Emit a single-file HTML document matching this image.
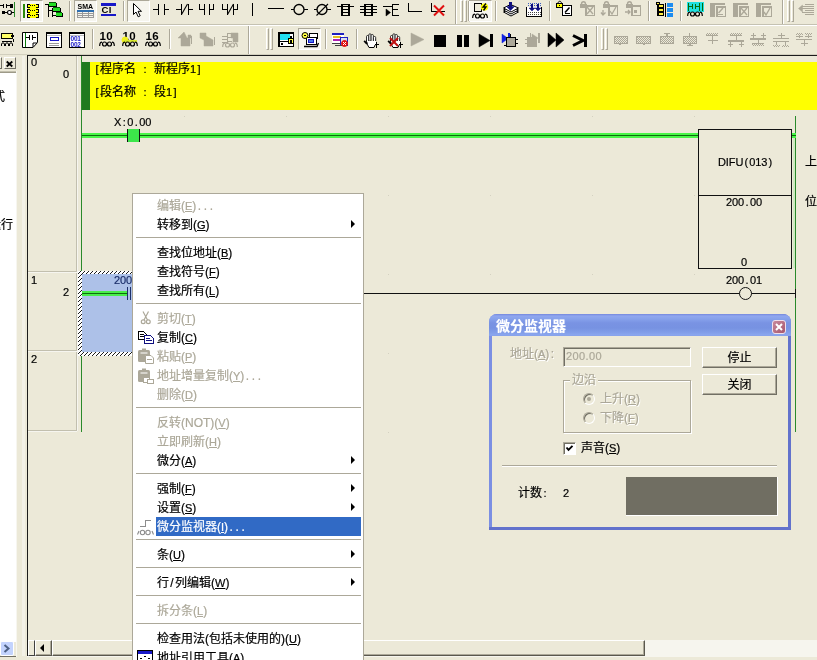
<!DOCTYPE html>
<html lang="zh-CN">
<head>
<meta charset="utf-8">
<title>CX-Programmer</title>
<style>
*{box-sizing:border-box;margin:0;padding:0}
html,body{width:817px;height:660px;overflow:hidden;background:#ece9d8}
body{position:relative;font-family:"Liberation Sans","Noto Sans CJK SC",sans-serif;font-size:12px;color:#000;line-height:1}
.a{position:absolute}
.mono{font-family:"Liberation Sans","Noto Sans CJK SC",sans-serif;font-size:11px;letter-spacing:-0.1px;white-space:pre}
.mono i{display:inline-block;width:6px;text-align:center;font-style:normal;letter-spacing:0}
.cj{font-family:"Liberation Sans","Noto Sans CJK SC",sans-serif;font-size:12px;white-space:pre}
svg{position:absolute;overflow:visible}
/* toolbar */
.sep{position:absolute;width:2px;height:20px;border-left:1px solid #aca899;border-right:1px solid #fff}
.grip{position:absolute;width:7px;height:22px}
.grip i{position:absolute;top:0;width:3px;height:22px;border-left:1px solid #fff;border-top:1px solid #fff;border-right:1px solid #aca899;border-bottom:1px solid #aca899}
.chk{position:absolute;width:23px;height:22px;background:#f6f5ee;border:1px solid;border-color:#aca899 #fff #fff #aca899}
/* menu */
#menu{left:132px;top:193px;width:232px;height:480px;background:#fff;border:1px solid #aca899}
.mi{position:absolute;left:2px;width:226px;height:19px}
.mi span{position:absolute;left:22px;top:4px;white-space:pre;font-size:12px}
.mi u{text-decoration:underline}
i.p{display:inline-block;width:4px;text-align:center;font-style:normal}
i.q{display:inline-block;width:6px;text-align:center;font-style:normal}
u{font-size:11px}
.mi.d span{color:#aca899}
.mi.h{background:linear-gradient(to right,transparent 21px,#316ac5 21px)}
.mi.h span{color:#fff}
.ms{position:absolute;left:3px;width:225px;height:1px;background:#aca899}
.arr{position:absolute;left:216px;top:5px;width:0;height:0;border-left:4px solid #000;border-top:4px solid transparent;border-bottom:4px solid transparent}
/* dialog */
.btn{position:absolute;background:#ece9d8;border:1px solid;border-color:#fff #716f64 #716f64 #fff;box-shadow:inset -1px -1px 0 #aca899;text-align:center}
.dis{color:#aca899;text-shadow:1px 1px 0 #fff}
#root{-webkit-text-stroke:0.2px}
</style>
</head>
<body>
<div id="root" style="position:absolute;left:0;top:0;width:817px;height:660px;overflow:hidden;will-change:transform">

<!-- ===== toolbar rows ===== -->
<div class="a" id="tb1" style="left:0;top:0;width:817px;height:24px"></div>
<div class="a" style="left:0;top:24px;width:817px;height:1px;background:#c5c2b2"></div>
<div class="a" style="left:0;top:25px;width:817px;height:1px;background:#fff"></div>
<div class="a" id="tb2" style="left:0;top:26px;width:817px;height:28px"></div>
<div class="a" style="left:0;top:54px;width:817px;height:1px;background:#d2cfbe"></div>

<!-- TB-START -->
<div class="chk" style="left:20px;top:0"></div>
<div class="chk" style="left:74px;top:0"></div>
<div class="chk" style="left:127px;top:0"></div>
<div class="chk" style="left:469px;top:0"></div>
<div class="chk" style="left:298px;top:28px"></div>
<div class="sep" style="left:69px;top:1px"></div>
<div class="sep" style="left:123px;top:1px"></div>
<div class="sep" style="left:468px;top:1px"></div>
<div class="sep" style="left:495px;top:1px"></div>
<div class="sep" style="left:549px;top:1px"></div>
<div class="sep" style="left:648px;top:1px"></div>
<div class="sep" style="left:680px;top:1px"></div>
<div class="sep" style="left:455px;top:0;height:24px"></div>
<div class="sep" style="left:782px;top:0;height:24px"></div>
<div class="sep" style="left:92px;top:29px"></div>
<div class="sep" style="left:169px;top:29px"></div>
<div class="sep" style="left:325px;top:29px"></div>
<div class="sep" style="left:356px;top:29px"></div>
<div class="sep" style="left:248px;top:26px;height:28px"></div>
<div class="sep" style="left:596px;top:26px;height:28px"></div>
<div class="grip" style="left:460px;top:0"><i style="left:0"></i><i style="left:4px"></i></div>
<div class="grip" style="left:787px;top:0"><i style="left:0"></i><i style="left:4px"></i></div>
<div class="grip" style="left:266px;top:28px"><i style="left:0"></i><i style="left:4px"></i></div>
<div class="grip" style="left:601px;top:28px"><i style="left:0"></i><i style="left:4px"></i></div>
<svg style="left:0;top:0" width="817" height="55" viewBox="0 0 817 55" shape-rendering="crispEdges"><defs><pattern id="dt" width="2" height="2" patternUnits="userSpaceOnUse"><rect width="2" height="2" fill="#ece9d8"/><rect width="1" height="1" fill="#aca899"/><rect x="1" y="1" width="1" height="1" fill="#aca899"/></pattern></defs>
<rect x="0" y="5" width="3" height="1" fill="#000"/>
<rect x="3" y="4" width="1" height="4" fill="#000"/>
<rect x="6" y="4" width="1" height="4" fill="#000"/>
<rect x="7" y="5" width="3" height="1" fill="#000"/>
<rect x="10" y="4" width="3" height="4" fill="#000"/>
<rect x="2" y="11" width="3" height="3" fill="#000"/>
<rect x="5" y="12" width="2" height="1" fill="#000"/>
<circle cx="9.5" cy="12.5" r="2" fill="#fff" stroke="#000" stroke-width="1.2" shape-rendering="auto"/>
<rect x="12" y="12" width="2" height="1" fill="#000"/>
<rect x="14" y="2" width="1" height="15" fill="#2a8a2a"/>
<rect x="23" y="4" width="2" height="14" fill="#2a8a0a"/>
<rect x="28" y="4" width="10" height="14" fill="#ffff00"/>
<rect x="27" y="4" width="1" height="4" fill="#000"/>
<rect x="27" y="4" width="3" height="1" fill="#000"/>
<rect x="27" y="7" width="3" height="1" fill="#000"/>
<rect x="38" y="4" width="1" height="4" fill="#000"/>
<rect x="36" y="4" width="3" height="1" fill="#000"/>
<rect x="36" y="7" width="3" height="1" fill="#000"/>
<rect x="30" y="5" width="1" height="1" fill="#000"/>
<rect x="32" y="5" width="1" height="1" fill="#000"/>
<rect x="34" y="5" width="1" height="1" fill="#000"/>
<rect x="27" y="9" width="1" height="4" fill="#000"/>
<rect x="27" y="9" width="3" height="1" fill="#000"/>
<rect x="27" y="12" width="3" height="1" fill="#000"/>
<rect x="38" y="9" width="1" height="4" fill="#000"/>
<rect x="36" y="9" width="3" height="1" fill="#000"/>
<rect x="36" y="12" width="3" height="1" fill="#000"/>
<rect x="30" y="10" width="1" height="1" fill="#000"/>
<rect x="32" y="10" width="1" height="1" fill="#000"/>
<rect x="34" y="10" width="1" height="1" fill="#000"/>
<rect x="27" y="14" width="1" height="4" fill="#000"/>
<rect x="27" y="14" width="3" height="1" fill="#000"/>
<rect x="27" y="17" width="3" height="1" fill="#000"/>
<rect x="38" y="14" width="1" height="4" fill="#000"/>
<rect x="36" y="14" width="3" height="1" fill="#000"/>
<rect x="36" y="17" width="3" height="1" fill="#000"/>
<rect x="30" y="15" width="1" height="1" fill="#000"/>
<rect x="32" y="15" width="1" height="1" fill="#000"/>
<rect x="34" y="15" width="1" height="1" fill="#000"/>
<rect x="45" y="4" width="4" height="1" fill="#000"/>
<rect x="48" y="4" width="1" height="13" fill="#000"/>
<rect x="49" y="3" width="7" height="3" fill="#22dd22"/>
<rect x="49" y="6" width="8" height="1" fill="#000"/>
<rect x="56" y="3" width="1" height="3" fill="#000"/>
<rect x="49" y="2" width="7" height="1" fill="#0a5a0a"/>
<rect x="48" y="10" width="4" height="1" fill="#000"/>
<rect x="52" y="8" width="1" height="9" fill="#000"/>
<rect x="53" y="8" width="7" height="3" fill="#22dd22"/>
<rect x="53" y="11" width="8" height="1" fill="#000"/>
<rect x="60" y="8" width="1" height="3" fill="#000"/>
<rect x="53" y="7" width="7" height="1" fill="#0a5a0a"/>
<rect x="52" y="15" width="4" height="1" fill="#000"/>
<rect x="56" y="13" width="6" height="3" fill="#22dd22"/>
<rect x="56" y="16" width="7" height="1" fill="#000"/>
<rect x="62" y="13" width="1" height="3" fill="#000"/>
<rect x="56" y="12" width="6" height="1" fill="#0a5a0a"/>
<text x="77.5" y="9" font-family="Liberation Sans,sans-serif" font-size="7" font-weight="bold" fill="#000">SMA</text>
<rect x="77" y="10" width="17" height="2" fill="#2f6fb0"/>
<rect x="77" y="13" width="17" height="1" fill="#9a9a9a"/>
<rect x="77" y="15" width="17" height="1" fill="#9a9a9a"/>
<rect x="77" y="17" width="17" height="1" fill="#9a9a9a"/>
<rect x="77" y="12" width="1" height="6" fill="#9a9a9a"/>
<rect x="82" y="12" width="1" height="6" fill="#9a9a9a"/>
<rect x="88" y="12" width="1" height="6" fill="#9a9a9a"/>
<rect x="93" y="12" width="1" height="6" fill="#9a9a9a"/>
<rect x="101" y="3" width="15" height="3" fill="#1818c8"/>
<rect x="101" y="14" width="15" height="2" fill="#1818c8"/>
<text x="101.5" y="13" font-family="Liberation Sans,sans-serif" font-size="9.5" font-weight="bold" letter-spacing="0.5" fill="#000">CI</text>
<path d="M133.5 3.5L133.5 14.5L136 12L138.2 16.8L140.2 15.8L138 11.3L141.5 11.3Z" fill="#fff" stroke="#000" stroke-width="1" shape-rendering="auto"/>
<rect x="153" y="9" width="5" height="1" fill="#000"/>
<rect x="158" y="4" width="1" height="11" fill="#000"/>
<rect x="164" y="4" width="1" height="11" fill="#000"/>
<rect x="165" y="9" width="4" height="1" fill="#000"/>
<rect x="176" y="9" width="5" height="1" fill="#000"/>
<rect x="181" y="4" width="1" height="11" fill="#000"/>
<rect x="188" y="4" width="1" height="11" fill="#000"/>
<rect x="189" y="9" width="4" height="1" fill="#000"/>
<line x1="181.5" y1="14.5" x2="187.5" y2="4" stroke="#000" stroke-width="1.1" shape-rendering="auto"/>
<rect x="199" y="4" width="1" height="6" fill="#000"/>
<rect x="199" y="9" width="5" height="1" fill="#000"/>
<rect x="204" y="4" width="1" height="11" fill="#000"/>
<rect x="209" y="4" width="1" height="11" fill="#000"/>
<rect x="209" y="9" width="5" height="1" fill="#000"/>
<rect x="213" y="4" width="1" height="6" fill="#000"/>
<rect x="222" y="4" width="1" height="6" fill="#000"/>
<rect x="222" y="9" width="5" height="1" fill="#000"/>
<rect x="227" y="4" width="1" height="11" fill="#000"/>
<rect x="233" y="4" width="1" height="11" fill="#000"/>
<rect x="233" y="9" width="5" height="1" fill="#000"/>
<rect x="237" y="4" width="1" height="6" fill="#000"/>
<line x1="227.5" y1="14.5" x2="233.5" y2="4" stroke="#000" stroke-width="1.1" shape-rendering="auto"/>
<rect x="252" y="3" width="1" height="13" fill="#000"/>
<rect x="268" y="8" width="16" height="1" fill="#000"/>
<rect x="291" y="9" width="3" height="1" fill="#000"/>
<rect x="304" y="9" width="4" height="1" fill="#000"/>
<circle cx="299" cy="9.5" r="5" fill="none" stroke="#000" stroke-width="1.35" shape-rendering="auto"/>
<rect x="314" y="9" width="3" height="1" fill="#000"/>
<rect x="327" y="9" width="4" height="1" fill="#000"/>
<circle cx="322" cy="9.5" r="5" fill="none" stroke="#000" stroke-width="1.35" shape-rendering="auto"/>
<line x1="316.5" y1="15.5" x2="328" y2="4" stroke="#000" stroke-width="1.1" shape-rendering="auto"/>
<rect x="343" y="5" width="5" height="10" fill="#ece9d8"/>
<rect x="341" y="4" width="2" height="12" fill="#000"/>
<rect x="348" y="4" width="2" height="12" fill="#000"/>
<rect x="341" y="4" width="9" height="1" fill="#000"/>
<rect x="341" y="15" width="9" height="1" fill="#000"/>
<rect x="337" y="6" width="17" height="1" fill="#000"/>
<rect x="343" y="9" width="5" height="1" fill="#000"/>
<rect x="343" y="12" width="5" height="1" fill="#000"/>
<rect x="366" y="5" width="5" height="10" fill="#ece9d8"/>
<rect x="364" y="4" width="2" height="12" fill="#000"/>
<rect x="371" y="4" width="2" height="12" fill="#000"/>
<rect x="364" y="4" width="9" height="1" fill="#000"/>
<rect x="364" y="15" width="9" height="1" fill="#000"/>
<rect x="360" y="6" width="17" height="1" fill="#000"/>
<rect x="360" y="9" width="17" height="1" fill="#000"/>
<rect x="360" y="12" width="17" height="1" fill="#000"/>
<rect x="383" y="6" width="10" height="1" fill="#000"/>
<rect x="392" y="4" width="1" height="12" fill="#000"/>
<rect x="392" y="4" width="7" height="1" fill="#000"/>
<rect x="392" y="9" width="6" height="1" fill="#000"/>
<rect x="392" y="15" width="7" height="1" fill="#000"/>
<path d="M386 9L386 16L390.5 12.5Z" fill="#000" stroke="#000" stroke-width="0.5" shape-rendering="auto"/>
<rect x="408" y="3" width="1" height="9" fill="#000"/>
<rect x="408" y="11" width="14" height="1" fill="#000"/>
<rect x="431" y="3" width="1" height="9" fill="#000"/>
<rect x="431" y="11" width="14" height="1" fill="#000"/>
<line x1="434" y1="5.5" x2="444" y2="15.5" stroke="#e01010" stroke-width="2" shape-rendering="auto"/>
<line x1="444" y1="5.5" x2="434" y2="15.5" stroke="#e01010" stroke-width="2" shape-rendering="auto"/>
<rect x="474.7" y="3.7" width="6.6" height="7.6" fill="#ece9d8" stroke="#000" stroke-width="1.4"/>
<circle cx="484.5" cy="7" r="3.3" fill="#ffff00" stroke="#ffff00" stroke-width="1" shape-rendering="auto"/>
<path d="M486 3.5L483 7L486 7L483.5 10.5" fill="none" stroke="#000" stroke-width="1.3" shape-rendering="auto"/>
<path d="M472.7 18C472.7 15 473.5 14.2 475 14.2" fill="none" stroke="#000" stroke-width="1.2" shape-rendering="auto"/>
<circle cx="477.5" cy="16" r="2" fill="none" stroke="#000" stroke-width="1.2" shape-rendering="auto"/>
<circle cx="482.5" cy="16" r="2" fill="none" stroke="#000" stroke-width="1.2" shape-rendering="auto"/>
<path d="M479.5 15.5L480.5 15.5" fill="none" stroke="#000" stroke-width="1" shape-rendering="auto"/>
<path d="M485 14.2C486.5 14.2 487.3 15 487.3 18" fill="none" stroke="#000" stroke-width="1.2" shape-rendering="auto"/>
<path d="M503.5 12L510.5 8.5L518.5 12L511 16Z" fill="#fff" stroke="#000" stroke-width="1" shape-rendering="auto"/>
<path d="M503.5 10L510.5 6.5L518.5 10L511 14Z" fill="#fff" stroke="#000" stroke-width="1" shape-rendering="auto"/>
<path d="M503.5 8L510.5 4.5L518.5 8L511 12Z" fill="#fff" stroke="#000" stroke-width="1" shape-rendering="auto"/>
<rect x="509" y="2" width="3" height="5" fill="#101080"/>
<path d="M506.5 6.5L514.5 6.5L510.5 10.5Z" fill="#101080" stroke="#101080" stroke-width="0.5" shape-rendering="auto"/>
<rect x="527" y="7" width="14" height="9" fill="#fff"/>
<rect x="526" y="7" width="1" height="10" fill="#000"/>
<rect x="541" y="7" width="1" height="10" fill="#000"/>
<rect x="526" y="16" width="16" height="1" fill="#000"/>
<line x1="528" y1="3.5" x2="541" y2="3.5" stroke="#4060c0" stroke-width="1" stroke-dasharray="1 1"/>
<line x1="528" y1="5.5" x2="541" y2="5.5" stroke="#4060c0" stroke-width="1" stroke-dasharray="1 1"/>
<line x1="528" y1="12.5" x2="541" y2="12.5" stroke="#404040" stroke-width="1" stroke-dasharray="1 1"/>
<line x1="528" y1="14.5" x2="541" y2="14.5" stroke="#404040" stroke-width="1" stroke-dasharray="1 1"/>
<rect x="531" y="4" width="2" height="4" fill="#101080"/>
<path d="M529 8L535 8L532 11Z" fill="#101080" stroke="#101080" stroke-width="0.5" shape-rendering="auto"/>
<rect x="537" y="4" width="2" height="4" fill="#101080"/>
<path d="M535 8L541 8L538 11Z" fill="#101080" stroke="#101080" stroke-width="0.5" shape-rendering="auto"/>
<rect x="556.5" y="3.5" width="6" height="4" fill="#ffff00" stroke="#000" stroke-width="1"/>
<path d="M558 3.5C558 0.5 561.5 0.5 561.5 3.5" fill="none" stroke="#000" stroke-width="1" shape-rendering="auto"/>
<rect x="559" y="5" width="1" height="1" fill="#000"/>
<rect x="562.5" y="5.5" width="9" height="10" fill="#fff" stroke="#000" stroke-width="1"/>
<rect x="563" y="5" width="8" height="1" fill="#000"/>
<rect x="571" y="6" width="1" height="9" fill="#000"/>
<line x1="565" y1="12.5" x2="569.5" y2="7.5" stroke="#000" stroke-width="1.5" shape-rendering="auto"/>
<rect x="565" y="13" width="5" height="1" fill="#000"/>
<rect x="580" y="4" width="7" height="4" fill="#aca899"/>
<path d="M581.5 4C581.5 1 585.5 1 585.5 4" fill="none" stroke="#aca899" stroke-width="1.4" shape-rendering="auto"/>
<rect x="585.75" y="5.75" width="8.5" height="9.5" fill="none" stroke="#aca899" stroke-width="1.5"/>
<line x1="587" y1="7" x2="593" y2="14" stroke="#aca899" stroke-width="1.3" shape-rendering="auto"/>
<line x1="593" y1="7" x2="587" y2="14" stroke="#aca899" stroke-width="1.3" shape-rendering="auto"/>
<rect x="603" y="4" width="7" height="4" fill="#aca899"/>
<path d="M604.5 4C604.5 1 608.5 1 608.5 4" fill="none" stroke="#aca899" stroke-width="1.4" shape-rendering="auto"/>
<rect x="608.75" y="5.75" width="8.5" height="9.5" fill="none" stroke="#aca899" stroke-width="1.5"/>
<path d="M610 11L612 14L616 7" fill="none" stroke="#aca899" stroke-width="1.3" shape-rendering="auto"/>
<path d="M603 10L603 14M601 12.5L603 15L605.5 12.5" fill="none" stroke="#aca899" stroke-width="1.3" shape-rendering="auto"/>
<rect x="626" y="4" width="7" height="4" fill="#aca899"/>
<path d="M627.5 4C627.5 1 631.5 1 631.5 4" fill="none" stroke="#aca899" stroke-width="1.4" shape-rendering="auto"/>
<rect x="631.75" y="5.75" width="8.5" height="9.5" fill="none" stroke="#aca899" stroke-width="1.5"/>
<rect x="634" y="10" width="3" height="3" fill="#aca899"/>
<path d="M625 12L630 12M628 10L630 12L628 14" fill="none" stroke="#aca899" stroke-width="1.3" shape-rendering="auto"/>
<rect x="665" y="3" width="1" height="14" fill="#000"/>
<rect x="657" y="3" width="1" height="13" fill="#000"/>
<rect x="658.5" y="4.5" width="5" height="3" fill="#ffee44" stroke="#000" stroke-width="1"/>
<rect x="658.5" y="8.5" width="5" height="3" fill="#ffee44" stroke="#000" stroke-width="1"/>
<rect x="658.5" y="12.5" width="5" height="3" fill="#ffee44" stroke="#000" stroke-width="1"/>
<rect x="656" y="2" width="4" height="2" fill="#ffee44"/>
<rect x="656.5" y="2.5" width="3" height="2" fill="#ffee44" stroke="#000" stroke-width="1"/>
<rect x="667" y="3" width="6" height="4" fill="#1c8cf0"/>
<rect x="667" y="8" width="6" height="4" fill="#1c8cf0"/>
<rect x="667" y="13" width="6" height="4" fill="#1c8cf0"/>
<rect x="687" y="2" width="17" height="10" fill="#20e0e0"/>
<rect x="688" y="3" width="1" height="8" fill="#0a6a0a"/>
<rect x="689" y="6" width="3" height="1" fill="#0a6a0a"/>
<rect x="692" y="4" width="1" height="5" fill="#0a6a0a"/>
<rect x="695" y="4" width="1" height="5" fill="#0a6a0a"/>
<rect x="696" y="6" width="3" height="1" fill="#0a6a0a"/>
<rect x="699" y="3" width="1" height="8" fill="#0a6a0a"/>
<rect x="702" y="3" width="1" height="8" fill="#0a6a0a"/>
<path d="M687.7 16C687.7 13 688.5 12.2 690 12.2" fill="none" stroke="#000" stroke-width="1.2" shape-rendering="auto"/>
<circle cx="692.5" cy="14" r="2" fill="none" stroke="#000" stroke-width="1.2" shape-rendering="auto"/>
<circle cx="697.5" cy="14" r="2" fill="none" stroke="#000" stroke-width="1.2" shape-rendering="auto"/>
<path d="M694.5 13.5L695.5 13.5" fill="none" stroke="#000" stroke-width="1" shape-rendering="auto"/>
<path d="M700 12.2C701.5 12.2 702.3 13 702.3 16" fill="none" stroke="#000" stroke-width="1.2" shape-rendering="auto"/>
<rect x="710" y="3" width="5" height="14" fill="#aca899"/>
<rect x="710" y="3" width="15" height="2" fill="#aca899"/>
<rect x="716.75" y="6.75" width="8.5" height="9.5" fill="#ece9d8" stroke="#aca899" stroke-width="1.5"/>
<line x1="718.5" y1="13" x2="723" y2="8" stroke="#aca899" stroke-width="1.4" shape-rendering="auto"/>
<rect x="718" y="14" width="5" height="1" fill="#aca899"/>
<rect x="733" y="3" width="5" height="14" fill="#aca899"/>
<rect x="733" y="3" width="15" height="2" fill="#aca899"/>
<rect x="739.75" y="6.75" width="8.5" height="9.5" fill="#ece9d8" stroke="#aca899" stroke-width="1.5"/>
<line x1="741" y1="8" x2="747" y2="15" stroke="#aca899" stroke-width="1.3" shape-rendering="auto"/>
<line x1="747" y1="8" x2="741" y2="15" stroke="#aca899" stroke-width="1.3" shape-rendering="auto"/>
<rect x="756" y="3" width="5" height="14" fill="#aca899"/>
<rect x="756" y="3" width="15" height="2" fill="#aca899"/>
<rect x="762.75" y="6.75" width="8.5" height="9.5" fill="#ece9d8" stroke="#aca899" stroke-width="1.5"/>
<path d="M764 12L766 15L770 8" fill="none" stroke="#aca899" stroke-width="1.4" shape-rendering="auto"/>
<rect x="805" y="4" width="9" height="1" fill="#aca899"/>
<rect x="802" y="6" width="12" height="1" fill="#aca899"/>
<rect x="802" y="8" width="12" height="1" fill="#aca899"/>
<rect x="805" y="10" width="9" height="1" fill="#aca899"/>
<rect x="802" y="12" width="12" height="1" fill="#aca899"/>
<rect x="805" y="14" width="9" height="1" fill="#aca899"/>
<path d="M798.5 8.5L802.5 5L802.5 12Z" fill="#aca899" stroke="#aca899" stroke-width="0.5" shape-rendering="auto"/>
<rect x="1.5" y="33.5" width="11" height="5" fill="#ffff66" stroke="#000" stroke-width="1"/>
<rect x="11" y="35" width="3" height="2" fill="#000"/>
<path d="M2 41.5L12 41.5" fill="none" stroke="#000" stroke-width="1"/>
<path d="M13 39L13 42" fill="none" stroke="#000" stroke-width="1"/>
<path d="M1.5 46L1.5 44C1.5 42.5 4.5 42.5 4.5 44L4.5 46" fill="none" stroke="#000" stroke-width="1" shape-rendering="auto"/>
<path d="M5.5 46L5.5 44C5.5 42.5 8.5 42.5 8.5 44L8.5 46" fill="none" stroke="#000" stroke-width="1" shape-rendering="auto"/>
<path d="M9.5 46L9.5 44C9.5 42.5 12.5 42.5 12.5 44L12.5 46" fill="none" stroke="#000" stroke-width="1" shape-rendering="auto"/>
<path d="M22.5 32.5L37.5 32.5L37.5 42.5L33 47.5L22.5 47.5Z" fill="#fff" stroke="#000" stroke-width="1" shape-rendering="auto"/>
<rect x="25" y="33" width="1" height="14" fill="#0a7a0a"/>
<rect x="26" y="37" width="3" height="1" fill="#000"/>
<rect x="29" y="35" width="1" height="5" fill="#000"/>
<rect x="32" y="35" width="1" height="5" fill="#000"/>
<rect x="33" y="37" width="3" height="1" fill="#000"/>
<path d="M33 47L33 43L37 43" fill="none" stroke="#000" stroke-width="1" shape-rendering="auto"/>
<rect x="46.5" y="32.5" width="15" height="15" fill="#fff" stroke="#000" stroke-width="1"/>
<rect x="46" y="33" width="16" height="1" fill="#000"/>
<rect x="47" y="35" width="14" height="1" fill="#c0c0c0"/>
<rect x="50.7" y="37.7" width="7.6" height="2.6" fill="#fff" stroke="#1818c8" stroke-width="1.4"/>
<rect x="49" y="43" width="10" height="1" fill="#9a9a9a"/>
<rect x="49" y="45" width="10" height="1" fill="#9a9a9a"/>
<rect x="69.5" y="32.5" width="15" height="15" fill="#fff" stroke="#000" stroke-width="1"/>
<rect x="69" y="33" width="16" height="1" fill="#000"/>
<rect x="70" y="35" width="14" height="1" fill="#c0c0c0"/>
<text x="70.5" y="40.8" font-family="Liberation Sans,sans-serif" font-size="6.5" font-weight="bold" letter-spacing="-0.2" fill="#1818c8">001</text>
<text x="70.5" y="46.5" font-family="Liberation Sans,sans-serif" font-size="6.5" font-weight="bold" letter-spacing="-0.2" fill="#1818c8">002</text>
<text x="99.5" y="40" font-family="Liberation Sans,sans-serif" font-size="11.5" font-weight="bold" letter-spacing="0.4" fill="#000">10</text>
<path d="M99.7 46C99.7 43 100.5 42.2 102 42.2" fill="none" stroke="#000" stroke-width="1.2" shape-rendering="auto"/>
<circle cx="104.5" cy="44" r="2" fill="none" stroke="#000" stroke-width="1.2" shape-rendering="auto"/>
<circle cx="109.5" cy="44" r="2" fill="none" stroke="#000" stroke-width="1.2" shape-rendering="auto"/>
<path d="M106.5 43.5L107.5 43.5" fill="none" stroke="#000" stroke-width="1" shape-rendering="auto"/>
<path d="M112 42.2C113.5 42.2 114.3 43 114.3 46" fill="none" stroke="#000" stroke-width="1.2" shape-rendering="auto"/>
<text x="122.5" y="40" font-family="Liberation Sans,sans-serif" font-size="11.5" font-weight="bold" letter-spacing="0.4" fill="#000">10</text>
<circle cx="125" cy="40" r="3" fill="#f0f020" stroke="#f0f020" stroke-width="1" shape-rendering="auto"/>
<rect x="124" y="40" width="13" height="2" fill="#d8e830"/>
<path d="M122.7 46C122.7 43 123.5 42.2 125 42.2" fill="none" stroke="#000" stroke-width="1.2" shape-rendering="auto"/>
<circle cx="127.5" cy="44" r="2" fill="none" stroke="#000" stroke-width="1.2" shape-rendering="auto"/>
<circle cx="132.5" cy="44" r="2" fill="none" stroke="#000" stroke-width="1.2" shape-rendering="auto"/>
<path d="M129.5 43.5L130.5 43.5" fill="none" stroke="#000" stroke-width="1" shape-rendering="auto"/>
<path d="M135 42.2C136.5 42.2 137.3 43 137.3 46" fill="none" stroke="#000" stroke-width="1.2" shape-rendering="auto"/>
<text x="145.5" y="40" font-family="Liberation Sans,sans-serif" font-size="11.5" font-weight="bold" letter-spacing="0.4" fill="#000">16</text>
<path d="M145.7 46C145.7 43 146.5 42.2 148 42.2" fill="none" stroke="#000" stroke-width="1.2" shape-rendering="auto"/>
<circle cx="150.5" cy="44" r="2" fill="none" stroke="#000" stroke-width="1.2" shape-rendering="auto"/>
<circle cx="155.5" cy="44" r="2" fill="none" stroke="#000" stroke-width="1.2" shape-rendering="auto"/>
<path d="M152.5 43.5L153.5 43.5" fill="none" stroke="#000" stroke-width="1" shape-rendering="auto"/>
<path d="M158 42.2C159.5 42.2 160.3 43 160.3 46" fill="none" stroke="#000" stroke-width="1.2" shape-rendering="auto"/>
<path d="M184 32L178 38L181 38L181 46L190 46L190 38L191 38L191 35L188 35L188 38L187 38Z" fill="#aca899" stroke="#aca899" stroke-width="0.5" shape-rendering="auto"/>
<rect x="191" y="36" width="1" height="8" fill="#aca899"/>
<path d="M200 33L206 33L206 36L213 40L213 46L204 46L204 40L200 38Z" fill="#aca899" stroke="#aca899" stroke-width="0.5" shape-rendering="auto"/>
<rect x="214" y="37" width="1" height="8" fill="#aca899"/>
<rect x="222" y="36" width="5" height="1" fill="#aca899"/>
<rect x="222" y="39" width="5" height="1" fill="#aca899"/>
<rect x="222" y="42" width="5" height="1" fill="#aca899"/>
<rect x="227" y="33" width="1" height="11" fill="#aca899"/>
<rect x="228" y="33" width="4" height="1" fill="#aca899"/>
<rect x="228" y="37" width="4" height="1" fill="#aca899"/>
<rect x="228" y="41" width="4" height="1" fill="#aca899"/>
<path d="M231 33L238 33L238 42L233 42L233 38L231 38Z" fill="#aca899" stroke="#aca899" stroke-width="0.5" shape-rendering="auto"/>
<path d="M222.7 47C222.7 44 223.5 43.2 225 43.2" fill="none" stroke="#aca899" stroke-width="1.2" shape-rendering="auto"/>
<circle cx="227.5" cy="45" r="2" fill="none" stroke="#aca899" stroke-width="1.2" shape-rendering="auto"/>
<circle cx="232.5" cy="45" r="2" fill="none" stroke="#aca899" stroke-width="1.2" shape-rendering="auto"/>
<path d="M229.5 44.5L230.5 44.5" fill="none" stroke="#aca899" stroke-width="1" shape-rendering="auto"/>
<path d="M235 43.2C236.5 43.2 237.3 44 237.3 47" fill="none" stroke="#aca899" stroke-width="1.2" shape-rendering="auto"/>
<rect x="278.75" y="32.75" width="14.5" height="13.5" fill="#fff" stroke="#000" stroke-width="1.5"/>
<rect x="280" y="34" width="10" height="6" fill="#20e0f0"/>
<rect x="280" y="41" width="12" height="1" fill="#000"/>
<rect x="281" y="43" width="2" height="2" fill="#000"/>
<rect x="288.5" y="38.5" width="5" height="5" fill="#ffff44" stroke="#000" stroke-width="1"/>
<rect x="290" y="36" width="2" height="2" fill="#000"/>
<rect x="290" y="40" width="2" height="3" fill="#000"/>
<rect x="309.7" y="33.7" width="7.6" height="4.6" fill="#fff" stroke="#000" stroke-width="1.4"/>
<rect x="306.7" y="37.7" width="9.6" height="6.6" fill="#fff" stroke="#000" stroke-width="1.4"/>
<rect x="308.5" y="39.5" width="5" height="3" fill="#4a7ae8" stroke="#1818c8" stroke-width="1"/>
<path d="M304 46.5L317 46.5L318.5 43" fill="none" stroke="#000" stroke-width="1.3" shape-rendering="auto"/>
<circle cx="305" cy="35.5" r="3" fill="#ffff44" stroke="#000" stroke-width="1" shape-rendering="auto"/>
<rect x="304" y="35" width="2" height="1" fill="#000"/>
<rect x="332" y="33" width="12" height="2" fill="#2020c0"/>
<rect x="332" y="35" width="12" height="8" fill="#fff"/>
<rect x="333" y="36" width="8" height="2" fill="#e8c020"/>
<rect x="333" y="39" width="8" height="2" fill="#b020b0"/>
<rect x="332" y="43" width="12" height="1" fill="#404040"/>
<rect x="340.5" y="37.5" width="7" height="8" fill="#dde" stroke="#2020c0" stroke-width="1"/>
<rect x="335" y="45" width="8" height="1" fill="#404040"/>
<circle cx="344.5" cy="43.5" r="3" fill="#e01010" stroke="#e01010" stroke-width="1" shape-rendering="auto"/>
<line x1="343" y1="42" x2="346" y2="45" stroke="#fff" stroke-width="1" shape-rendering="auto"/>
<line x1="346" y1="42" x2="343" y2="45" stroke="#fff" stroke-width="1" shape-rendering="auto"/>
<path d="M366.5 40L366.5 43L369 47.5L374 47.5L375.5 44L375.5 39Z" fill="#fff" stroke="#000" stroke-width="1" shape-rendering="auto"/>
<rect x="366.5" y="35.5" width="2.3" height="7.5" rx="1.1" fill="#fff" stroke="#000" stroke-width="0.8" shape-rendering="auto"/>
<rect x="368.8" y="33.8" width="2.3" height="7.5" rx="1.1" fill="#fff" stroke="#000" stroke-width="0.8" shape-rendering="auto"/>
<rect x="371.1" y="34.5" width="2.3" height="7.5" rx="1.1" fill="#fff" stroke="#000" stroke-width="0.8" shape-rendering="auto"/>
<rect x="373.4" y="36.5" width="2.3" height="7.5" rx="1.1" fill="#fff" stroke="#000" stroke-width="0.8" shape-rendering="auto"/>
<rect x="367.5" y="41" width="8" height="4" fill="#fff"/>
<path d="M367 44L364.2 40.8" fill="none" stroke="#000" stroke-width="1.8" shape-rendering="auto"/>
<rect x="376" y="42" width="1" height="6" fill="#000"/>
<rect x="375" y="44" width="4" height="1" fill="#000"/>
<path d="M390.5 40L390.5 43L393 47.5L398 47.5L399.5 44L399.5 39Z" fill="#fff" stroke="#000" stroke-width="1" shape-rendering="auto"/>
<rect x="390.5" y="35.5" width="2.3" height="7.5" rx="1.1" fill="#fff" stroke="#000" stroke-width="0.8" shape-rendering="auto"/>
<rect x="392.8" y="33.8" width="2.3" height="7.5" rx="1.1" fill="#fff" stroke="#000" stroke-width="0.8" shape-rendering="auto"/>
<rect x="395.1" y="34.5" width="2.3" height="7.5" rx="1.1" fill="#fff" stroke="#000" stroke-width="0.8" shape-rendering="auto"/>
<rect x="397.4" y="36.5" width="2.3" height="7.5" rx="1.1" fill="#fff" stroke="#000" stroke-width="0.8" shape-rendering="auto"/>
<rect x="391.5" y="41" width="8" height="4" fill="#fff"/>
<path d="M391 44L388.2 40.8" fill="none" stroke="#000" stroke-width="1.8" shape-rendering="auto"/>
<rect x="400" y="42" width="1" height="6" fill="#000"/>
<rect x="399" y="44" width="4" height="1" fill="#000"/>
<line x1="390" y1="38" x2="398" y2="46" stroke="#c01010" stroke-width="2" shape-rendering="auto"/>
<line x1="398" y1="38" x2="390" y2="46" stroke="#c01010" stroke-width="2" shape-rendering="auto"/>
<path d="M411 33L424 39.5L411 46Z" fill="#aca899" stroke="#aca899" stroke-width="0.5" shape-rendering="auto"/>
<rect x="434" y="35" width="12" height="12" fill="#000"/>
<rect x="457" y="35" width="5" height="12" fill="#000"/>
<rect x="464" y="35" width="5" height="12" fill="#000"/>
<path d="M479 34L490 40.5L479 47Z" fill="#000" stroke="#000" stroke-width="0.5" shape-rendering="auto"/>
<rect x="490" y="34" width="3" height="13" fill="#000"/>
<path d="M502 34L508 38.5L502 43Z" fill="#1020e0" stroke="#1020e0" stroke-width="0.5" shape-rendering="auto"/>
<rect x="508" y="33" width="2" height="10" fill="#1020e0"/>
<rect x="506.5" y="37.5" width="9" height="9" fill="#aca899" stroke="#000" stroke-width="1"/>
<rect x="510" y="34" width="1" height="4" fill="#000"/>
<rect x="516" y="39" width="2" height="1" fill="#000"/>
<rect x="516" y="43" width="2" height="1" fill="#000"/>
<rect x="504" y="45" width="3" height="1" fill="#000"/>
<rect x="527" y="37" width="10" height="10" fill="#aca899"/>
<path d="M532 34L538 38L532 42Z" fill="#aca899" stroke="#aca899" stroke-width="0.5" shape-rendering="auto"/>
<rect x="538" y="33" width="2" height="10" fill="#aca899"/>
<rect x="525" y="39" width="2" height="1" fill="#aca899"/>
<rect x="525" y="43" width="2" height="1" fill="#aca899"/>
<rect x="530" y="33" width="1" height="4" fill="#aca899"/>
<path d="M548 33L556 40L548 47Z" fill="#000" stroke="#000" stroke-width="0.5" shape-rendering="auto"/>
<path d="M556 33L564 40L556 47Z" fill="#000" stroke="#000" stroke-width="0.5" shape-rendering="auto"/>
<path d="M573 35.5L583 40.5L573 45.5" fill="none" stroke="#000" stroke-width="3" shape-rendering="auto"/>
<rect x="584" y="34" width="3" height="13" fill="#000"/>
<rect x="614" y="36" width="14" height="8" fill="url(#dt)"/>
<rect x="614.5" y="36.5" width="13" height="7" fill="none" stroke="#aca899" stroke-width="1"/>
<rect x="619" y="44" width="2" height="1" fill="#aca899"/>
<rect x="636" y="36" width="15" height="8" fill="url(#dt)"/>
<rect x="636.5" y="36.5" width="14" height="7" fill="none" stroke="#aca899" stroke-width="1"/>
<rect x="643" y="44" width="2" height="1" fill="#aca899"/>
<rect x="660" y="36" width="14" height="8" fill="url(#dt)"/>
<rect x="660.5" y="36.5" width="13" height="7" fill="none" stroke="#aca899" stroke-width="1"/>
<rect x="664" y="33" width="6" height="1" fill="#aca899"/>
<rect x="666" y="34" width="2" height="2" fill="#aca899"/>
<rect x="683" y="36" width="14" height="8" fill="url(#dt)"/>
<rect x="683.5" y="36.5" width="13" height="7" fill="none" stroke="#aca899" stroke-width="1"/>
<rect x="689" y="33" width="1" height="3" fill="#aca899"/>
<rect x="687" y="45" width="6" height="1" fill="#aca899"/>
<rect x="689" y="44" width="2" height="1" fill="#aca899"/>
<rect x="706" y="35" width="12" height="1" fill="#aca899"/>
<rect x="706" y="33" width="12" height="2" fill="url(#dt)"/>
<rect x="712" y="36" width="1" height="8" fill="#aca899"/>
<rect x="708" y="40" width="10" height="1" fill="#aca899"/>
<rect x="730" y="33" width="12" height="2" fill="url(#dt)"/>
<rect x="730" y="35" width="12" height="1" fill="#aca899"/>
<rect x="736" y="36" width="1" height="4" fill="#aca899"/>
<rect x="728" y="40" width="16" height="2" fill="#aca899"/>
<rect x="730" y="42" width="1" height="5" fill="#aca899"/>
<rect x="741" y="42" width="1" height="5" fill="#aca899"/>
<rect x="728" y="44" width="5" height="1" fill="#aca899"/>
<rect x="739" y="44" width="5" height="1" fill="#aca899"/>
<rect x="753" y="33" width="1" height="5" fill="#aca899"/>
<rect x="763" y="33" width="1" height="5" fill="#aca899"/>
<rect x="751" y="35" width="5" height="1" fill="#aca899"/>
<rect x="761" y="35" width="5" height="1" fill="#aca899"/>
<rect x="750" y="38" width="16" height="2" fill="#aca899"/>
<rect x="758" y="40" width="1" height="4" fill="#aca899"/>
<rect x="752" y="44" width="12" height="2" fill="url(#dt)"/>
<rect x="752" y="43" width="12" height="1" fill="#aca899"/>
<rect x="781" y="33" width="1" height="5" fill="#aca899"/>
<rect x="778" y="35" width="7" height="1" fill="#aca899"/>
<rect x="773" y="38" width="16" height="1" fill="#aca899"/>
<rect x="773" y="41" width="16" height="1" fill="#aca899"/>
<rect x="776" y="41" width="1" height="4" fill="#aca899"/>
<rect x="785" y="41" width="1" height="4" fill="#aca899"/>
<rect x="773" y="45" width="7" height="2" fill="url(#dt)"/>
<rect x="782" y="45" width="7" height="2" fill="url(#dt)"/>
<rect x="796" y="33" width="7" height="2" fill="url(#dt)"/>
<rect x="805" y="33" width="7" height="2" fill="url(#dt)"/>
<rect x="799" y="35" width="1" height="3" fill="#aca899"/>
<rect x="808" y="35" width="1" height="3" fill="#aca899"/>
<rect x="796" y="36" width="7" height="1" fill="#aca899"/>
<rect x="805" y="36" width="7" height="1" fill="#aca899"/>
<rect x="796" y="39" width="16" height="1" fill="#aca899"/>
<rect x="804" y="39" width="1" height="7" fill="#aca899"/>
<rect x="801" y="43" width="7" height="1" fill="#aca899"/>
</svg>
<!-- TB-END -->

<!-- ===== left docked panel ===== -->
<div class="a" style="left:-9px;top:57px;width:11px;height:12px;border:1px solid;border-color:#fff #716f64 #716f64 #fff"></div>
<div class="a" style="left:4px;top:57px;width:12px;height:12px;border:1px solid;border-color:#fff #716f64 #716f64 #fff"></div>
<svg style="left:6px;top:61px" width="7" height="6" viewBox="0 0 7 6"><path d="M0.7 0.5L6.300 5.5M6.300 0.5L0.7 5.5" stroke="#000" stroke-width="1.800"/></svg>
<div class="a" style="left:0;top:71px;width:16px;height:1px;background:#c2bfad"></div>
<div class="a" style="left:0;top:72px;width:16px;height:1px;background:#9d9a88"></div>
<div class="a" style="left:0;top:73px;width:16px;height:569px;background:#fff"></div>
<div class="a" style="left:16px;top:71px;width:1px;height:586px;background:#f7f6f0"></div>
<div class="a" style="left:22px;top:56px;width:3px;height:600px;background:#f3f1e7"></div>
<div class="a cj" style="left:-7px;top:91px">式</div>
<div class="a cj" style="left:-11px;top:219px">运行</div>
<div class="a" style="left:0;top:641px;width:14px;height:15px;background:#c3d3fd;border:1px solid #fff;border-radius:2px"></div>
<svg style="left:3px;top:644px" width="8" height="9" viewBox="0 0 8 9"><path d="M1.5 1L5.5 4.5L1.5 8" fill="none" stroke="#4d6185" stroke-width="2"/></svg>
<div class="a" style="left:0;top:656px;width:16px;height:1px;background:#716f64"></div>

<!-- ===== ladder view frame ===== -->
<div class="a" style="left:27px;top:55px;width:790px;height:1px;background:#1c1c1c"></div>
<div class="a" style="left:27px;top:55px;width:1px;height:601px;background:#1c1c1c"></div>

<!-- row-number column -->
<div class="a" style="left:76px;top:56px;width:1px;height:375px;background:#c2bfae"></div>
<div class="a" style="left:77px;top:56px;width:1px;height:375px;background:#f6f5ef"></div>
<div class="a" style="left:28px;top:271px;width:49px;height:1px;background:#c2bfae"></div>
<div class="a" style="left:28px;top:272px;width:49px;height:1px;background:#f6f5ef"></div>
<div class="a" style="left:28px;top:350px;width:49px;height:1px;background:#c2bfae"></div>
<div class="a" style="left:28px;top:351px;width:49px;height:1px;background:#f6f5ef"></div>
<div class="a" style="left:28px;top:430px;width:49px;height:1px;background:#c2bfae"></div>
<div class="a" style="left:28px;top:431px;width:49px;height:1px;background:#f6f5ef"></div>
<div class="a mono" style="left:31px;top:57px">0</div>
<div class="a mono" style="left:63px;top:69px">0</div>
<div class="a mono" style="left:31px;top:275px">1</div>
<div class="a mono" style="left:63px;top:287px">2</div>
<div class="a mono" style="left:31px;top:354px">2</div>

<!-- header band -->
<div class="a" style="left:82px;top:62px;width:8px;height:48px;background:#1f7a1f"></div>
<div class="a" style="left:90px;top:62px;width:727px;height:48px;background:#ffff00"></div>
<div class="a cj" style="left:94px;top:63px"><span class="mono"><i>[</i></span>程序名<span class="mono"><i> </i><i>:</i><i> </i></span>新程序<span class="mono">1<i>]</i></span></div>
<div class="a cj" style="left:94px;top:86px"><span class="mono"><i>[</i></span>段名称<span class="mono"><i> </i><i>:</i><i> </i></span>段<span class="mono">1<i>]</i></span></div>

<!-- grid dots -->
<svg style="left:0;top:0" width="817" height="660" viewBox="0 0 817 660" fill="#d4d1c1" shape-rendering="crispEdges"><rect x="184" y="116" width="1" height="1"/><rect x="184" y="195" width="1" height="1"/><rect x="184" y="274" width="1" height="1"/><rect x="184" y="353" width="1" height="1"/><rect x="184" y="432" width="1" height="1"/><rect x="286" y="116" width="1" height="1"/><rect x="286" y="195" width="1" height="1"/><rect x="286" y="274" width="1" height="1"/><rect x="286" y="353" width="1" height="1"/><rect x="286" y="432" width="1" height="1"/><rect x="388" y="116" width="1" height="1"/><rect x="388" y="195" width="1" height="1"/><rect x="388" y="274" width="1" height="1"/><rect x="388" y="353" width="1" height="1"/><rect x="388" y="432" width="1" height="1"/><rect x="490" y="116" width="1" height="1"/><rect x="490" y="195" width="1" height="1"/><rect x="490" y="274" width="1" height="1"/><rect x="490" y="353" width="1" height="1"/><rect x="490" y="432" width="1" height="1"/><rect x="592" y="116" width="1" height="1"/><rect x="592" y="195" width="1" height="1"/><rect x="592" y="274" width="1" height="1"/><rect x="592" y="353" width="1" height="1"/><rect x="592" y="432" width="1" height="1"/><rect x="694" y="116" width="1" height="1"/><rect x="694" y="195" width="1" height="1"/><rect x="694" y="274" width="1" height="1"/><rect x="694" y="353" width="1" height="1"/><rect x="694" y="432" width="1" height="1"/></svg>
<!-- bus bars -->
<div class="a" style="left:81px;top:56px;width:1px;height:376px;background:#2a8a2a"></div>
<div class="a" style="left:795px;top:116px;width:1px;height:316px;background:#2a8a2a"></div>

<!-- rung 0 -->
<div class="a" style="left:82px;top:133px;width:616px;height:5px;background:#48f548"></div>
<div class="a" style="left:82px;top:135px;width:616px;height:1px;background:#0f6a0f"></div>
<div class="a" style="left:792px;top:133px;width:4px;height:5px;background:#48f548"></div>
<div class="a" style="left:792px;top:135px;width:4px;height:1px;background:#0f6a0f"></div>
<div class="a" style="left:793px;top:138px;width:2px;height:130px;background:#cfe9c2"></div>
<div class="a" style="left:127px;top:129px;width:13px;height:13px;background:#3ce64a;border-left:1px solid #111;border-right:1px solid #111"></div>
<div class="a mono" style="left:114px;top:117px">X<i>:</i>0<i>.</i>00</div>
<div class="a" style="left:698px;top:129px;width:94px;height:140px;border:1px solid #111"></div>
<div class="a" style="left:698px;top:195px;width:94px;height:1px;background:#111"></div>
<div class="a mono" style="left:718px;top:157px">DIFU<i>(</i>013<i>)</i></div>
<div class="a mono" style="left:726px;top:197px">200<i>.</i>00</div>
<div class="a mono" style="left:741px;top:257px">0</div>
<div class="a cj" style="left:805px;top:156px">上升</div>
<div class="a cj" style="left:805px;top:196px">位</div>

<!-- rung 1 -->
<div class="a mono" style="left:726px;top:275px">200<i>.</i>01</div>
<div class="a" style="left:364px;top:293px;width:432px;height:1px;background:#111"></div>
<div class="a" style="left:739px;top:287px;width:13px;height:13px;border:1px solid #111;border-radius:50%;background:#ece9d8"></div>
<div class="a" style="left:795px;top:289px;width:1px;height:9px;background:#111"></div>

<!-- selected cell -->
<div class="a" style="left:78px;top:271px;width:61px;height:85px;background:repeating-linear-gradient(135deg,#fff 0,#fff 1.6px,#1a1a1a 1.6px,#1a1a1a 2.7px,#fff 2.7px,#fff 2.8284px)"></div>
<div class="a" style="left:82px;top:274px;width:57px;height:78px;background:#adc1e8"></div>
<div class="a" style="left:82px;top:291px;width:45px;height:5px;background:#48ee48"></div>
<div class="a" style="left:82px;top:293px;width:45px;height:1px;background:#0f6a0f"></div>
<div class="a" style="left:127px;top:287px;width:1px;height:13px;background:#1c2f6a"></div>
<div class="a" style="left:130px;top:287px;width:1px;height:13px;background:#1c2f6a"></div>
<div class="a mono" style="left:114px;top:275px;color:#1c2f6a">200<i>.</i>00</div>

<!-- horizontal scrollbar -->
<div class="a" style="left:28px;top:640px;width:789px;height:16px;background:#f6f5ee"></div>
<div class="a" style="left:28px;top:640px;width:7px;height:16px;background:#ece9d8;border:1px solid;border-color:#fff #404040 #404040 #fff"></div>
<div class="a" style="left:35px;top:640px;width:17px;height:16px;background:#ece9d8;border:1px solid;border-color:#fff #5a584e #5a584e #fff;box-shadow:inset -1px -1px 0 #aca899"></div>
<div class="a" style="left:40px;top:644px;width:0;height:0;border-right:4px solid #000;border-top:4px solid transparent;border-bottom:4px solid transparent"></div>
<div class="a" style="left:52px;top:640px;width:593px;height:16px;background:#ece9d8;border:1px solid;border-color:#fff #5a584e #5a584e #fff;box-shadow:inset -1px -1px 0 #aca899"></div>
<div class="a" style="left:27px;top:656px;width:790px;height:1px;background:#f6f5ee"></div>

<!-- ===== context menu ===== -->
<div class="a" id="menu">
<!-- MENU-ICONS -->
<div class="mi d" style="top:2px"><span>编辑<i class="p">(</i><u>E</u><i class="p">)</i><i class="q">.</i><i class="q">.</i><i class="q">.</i></span></div>
<div class="mi" style="top:21px"><span>转移到<i class="p">(</i><u>G</u><i class="p">)</i></span><b class="arr"></b></div>
<div class="ms" style="top:43px"></div>
<div class="mi" style="top:49px"><span>查找位地址<i class="p">(</i><u>B</u><i class="p">)</i></span></div>
<div class="mi" style="top:68px"><span>查找符号<i class="p">(</i><u>F</u><i class="p">)</i></span></div>
<div class="mi" style="top:87px"><span>查找所有<i class="p">(</i><u>L</u><i class="p">)</i></span></div>
<div class="ms" style="top:109px"></div>
<div class="mi d" style="top:115px"><span>剪切<i class="p">(</i><u>T</u><i class="p">)</i></span></div>
<div class="mi" style="top:134px"><span>复制<i class="p">(</i><u>C</u><i class="p">)</i></span></div>
<div class="mi d" style="top:153px"><span>粘贴<i class="p">(</i><u>P</u><i class="p">)</i></span></div>
<div class="mi d" style="top:172px"><span>地址增量复制<i class="p">(</i><u>Y</u><i class="p">)</i><i class="q">.</i><i class="q">.</i><i class="q">.</i></span></div>
<div class="mi d" style="top:191px"><span>删除<i class="p">(</i><u>D</u><i class="p">)</i></span></div>
<div class="ms" style="top:213px"></div>
<div class="mi d" style="top:219px"><span>反转<i class="p">(</i>NOT<i class="p">)</i><i class="p">(</i><u>V</u><i class="p">)</i></span></div>
<div class="mi d" style="top:238px"><span>立即刷新<i class="p">(</i><u>H</u><i class="p">)</i></span></div>
<div class="mi" style="top:257px"><span>微分<i class="p">(</i><u>A</u><i class="p">)</i></span><b class="arr"></b></div>
<div class="ms" style="top:279px"></div>
<div class="mi" style="top:285px"><span>强制<i class="p">(</i><u>F</u><i class="p">)</i></span><b class="arr"></b></div>
<div class="mi" style="top:304px"><span>设置<i class="p">(</i><u>S</u><i class="p">)</i></span><b class="arr"></b></div>
<div class="mi h" style="top:323px"><span>微分监视器<i class="p">(</i><u>I</u><i class="p">)</i><i class="q">.</i><i class="q">.</i><i class="q">.</i></span></div>
<div class="ms" style="top:345px"></div>
<div class="mi" style="top:351px"><span>条<i class="p">(</i><u>U</u><i class="p">)</i></span><b class="arr"></b></div>
<div class="ms" style="top:373px"></div>
<div class="mi" style="top:379px"><span>行<i class="q">/</i>列编辑<i class="p">(</i><u>W</u><i class="p">)</i></span><b class="arr"></b></div>
<div class="ms" style="top:401px"></div>
<div class="mi d" style="top:407px"><span>拆分条<i class="p">(</i><u>L</u><i class="p">)</i></span></div>
<div class="ms" style="top:429px"></div>
<div class="mi" style="top:435px"><span>检查用法<i class="p">(</i>包括未使用的<i class="p">)</i><i class="p">(</i><u>U</u><i class="p">)</i></span></div>
<div class="mi" style="top:454px"><span>地址引用工具<i class="p">(</i><u>A</u><i class="p">)</i></span></div>
</div>

<!-- menu icons -->
<svg style="left:0;top:0" width="817" height="660" viewBox="0 0 817 660">
<!-- scissors -->
<g fill="none" stroke="#aca899" stroke-width="1.2"><path d="M143 311.5L147.5 320M148.5 311.5L144 320"/><circle cx="143.2" cy="321.8" r="1.9"/><circle cx="148.3" cy="321.8" r="1.9"/></g>
<!-- copy -->
<g shape-rendering="crispEdges"><path d="M138.5 331.5H143.5L146.5 334.5V339.5H138.5Z" fill="#fff" stroke="#000"/><path d="M140 334.5H144M140 336.500H145" stroke="#000"/>
<path d="M144.500 335.500H150.500L153.500 338.500V343.500H144.500Z" fill="#fff" stroke="#101080"/><path d="M146 338.500H150M146 340.500H152" stroke="#101080"/></g>
<!-- paste -->
<g><rect x="138" y="350" width="12" height="12" rx="1.500" fill="#aca899"/><rect x="142" y="348.500" width="4" height="2.500" fill="#aca899"/><rect x="140.500" y="352.500" width="7" height="1" fill="#fff"/>
<path d="M145.500 355.500H151L153.500 358V363.500H145.500Z" fill="#fff" stroke="#aca899"/><path d="M147 359.500H152" stroke="#aca899"/></g>
<!-- incr paste -->
<g><rect x="138" y="370" width="12" height="12" rx="1.500" fill="#aca899"/><rect x="142" y="368.500" width="4" height="2.500" fill="#aca899"/><rect x="140.500" y="372.500" width="7" height="1" fill="#fff"/>
<rect x="143.500" y="377.500" width="6" height="5" fill="#fff" stroke="#aca899"/><rect x="147.500" y="379.500" width="6" height="4" fill="#fff" stroke="#aca899"/></g>
<!-- diff monitor -->
<g fill="none" stroke="#8c8c8c"><path d="M140 526.500H145.500V520.500H151" shape-rendering="crispEdges"/><path d="M137.500 534.500L139 531M152 531L153.500 534.500" stroke-width="1.100"/><circle cx="142.500" cy="532.500" r="2.200" stroke-width="1.100"/><circle cx="148" cy="532.500" r="2.200" stroke-width="1.100"/></g>
<!-- address ref tool -->
<g shape-rendering="crispEdges"><rect x="137.500" y="650.500" width="15" height="12" fill="#fff" stroke="#000"/><rect x="138" y="651" width="14" height="3" fill="#1818c8"/><path d="M140 658.500H142M144 656.500H146M148 658.500H150" stroke="#000"/></g>
</svg>

<!-- ===== dialog ===== -->
<div class="a" id="dlg" style="left:489px;top:314px;width:302px;height:216px;border-radius:8px 8px 0 0;background:linear-gradient(to right,#7b8fe3 0,#7b8fe3 50%,#6272cc 50%,#6272cc 100%);overflow:hidden">
<div class="a" style="left:0;top:213px;width:302px;height:3px;background:#6272cc"></div>
<div class="a" style="left:0;top:0;width:302px;height:22px;background:linear-gradient(to bottom,#7488dd 0,#90a7ef 2px,#86a1eb 5px,#7993e3 9px,#7792e2 14px,#809ce8 18px,#8aa6ee 21px,#86a0ea 22px)"></div>
<div class="a" style="left:3px;top:22px;width:296px;height:191px;background:#ece9d8"></div>
<div class="a cj" style="left:7px;top:5px;font-size:14px;font-weight:bold;color:#fff;letter-spacing:0;-webkit-text-stroke:0;text-shadow:0 0 1px #b8c8f5">微分监视器</div>
<!-- close btn -->
<div class="a" style="left:283px;top:6px;width:14px;height:14px;border-radius:3px;border:1px solid #f0e0ea;background:linear-gradient(135deg,#c98a9c,#a5566e)"></div>
<svg style="left:286px;top:9px" width="8" height="8" viewBox="0 0 8 8"><path d="M1 1L7 7M7 1L1 7" stroke="#fff" stroke-width="2"/></svg>
</div>
<!-- dialog contents (absolute page coords) -->
<div class="a cj dis" style="left:510px;top:348px">地址<i class="p">(</i><u>A</u><i class="p">)</i><i class="q">:</i></div>
<div class="a" style="left:563px;top:347px;width:128px;height:20px;border:1px solid;border-color:#aca899 #fff #fff #aca899;box-shadow:inset 1px 1px 0 #716f64"></div>
<div class="a" style="left:566px;top:351px;font-size:11px;color:#aca899;letter-spacing:0.4px">200.00</div>
<div class="a" style="left:563px;top:380px;width:128px;height:53px;border:1px solid #aca899;box-shadow:1px 1px 0 #fff,inset 1px 1px 0 #fff"></div>
<div class="a cj dis" style="left:570px;top:374px;background:#ece9d8;padding:0 2px">边沿</div>
<div class="a" style="left:583px;top:393px;width:12px;height:12px;border-radius:50%;border:1px solid;border-color:#aca899 #fff #fff #aca899;box-shadow:inset 1px 1px 0 #716f64"></div>
<div class="a" style="left:587px;top:397px;width:4px;height:4px;border-radius:50%;background:#aca899"></div>
<div class="a" style="left:583px;top:412px;width:12px;height:12px;border-radius:50%;border:1px solid;border-color:#aca899 #fff #fff #aca899;box-shadow:inset 1px 1px 0 #716f64"></div>
<div class="a cj dis" style="left:600px;top:393px">上升<i class="p">(</i><u>R</u><i class="p">)</i></div>
<div class="a cj dis" style="left:600px;top:412px">下降<i class="p">(</i><u>F</u><i class="p">)</i></div>
<div class="btn cj" style="left:702px;top:347px;width:75px;height:21px;padding-top:4px">停止</div>
<div class="btn cj" style="left:702px;top:374px;width:75px;height:21px;padding-top:4px">关闭</div>
<div class="a" style="left:563px;top:442px;width:13px;height:13px;background:#fff;border:1px solid;border-color:#aca899 #fff #fff #aca899;box-shadow:inset 1px 1px 0 #716f64"></div>
<svg style="left:566px;top:445px" width="7" height="7" viewBox="0 0 7 7"><path d="M0.5 2.5L2.5 4.8L6.5 0.8" fill="none" stroke="#000" stroke-width="1.9"/></svg>
<div class="a cj" style="left:581px;top:442px">声音<i class="p">(</i><u>S</u><i class="p">)</i></div>
<div class="a" style="left:502px;top:465px;width:275px;height:1px;background:#aca899"></div>
<div class="a" style="left:502px;top:466px;width:275px;height:1px;background:#fff"></div>
<div class="a cj" style="left:518px;top:487px">计数<span class="mono"><i>:</i></span></div>
<div class="a" style="left:563px;top:488px;font-size:11px">2</div>
<div class="a" style="left:626px;top:477px;width:152px;height:39px;background:#706e62;border-right:1px solid #fff;border-bottom:1px solid #fff"></div>


</div>
</body>
</html>
